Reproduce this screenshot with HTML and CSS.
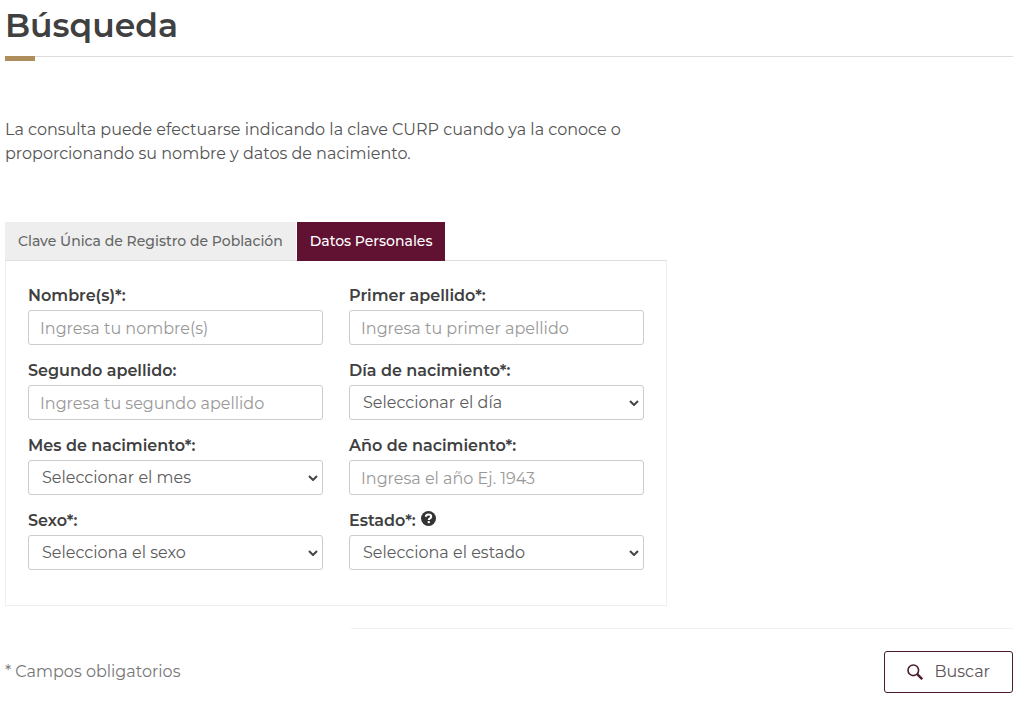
FILE: index.html
```
<!DOCTYPE html>
<html lang="es">

<head>
    <meta charset="UTF-8">
    <meta name="viewport" content="width=device-width, initial-scale=1.0">
    <title>Búsqueda</title>
    <link rel="stylesheet" href="styles.css">
</head>

<body>
    <main class="container">
        <h1>Búsqueda</h1>

        <form id="searchForm" class="row">
            <p class="intro">La consulta puede efectuarse indicando la clave CURP cuando ya la conoce o proporcionando su nombre y datos de nacimiento.</p>

            <div class="search">
                <nav class="tabs">
                    <a class="tab" href="#clave">Clave Única de Registro de Población</a>
                    <a class="tab active" href="#datos">Datos Personales</a>
                </nav>

                <div class="panel" id="datos">
                    <div class="form-group">
                        <label for="nombre">Nombre(s)*:</label>
                        <input type="text" id="nombre" name="nombre" placeholder="Ingresa tu nombre(s)">
                    </div>
                    <div class="form-group">
                        <label for="primerApellido">Primer apellido*:</label>
                        <input type="text" id="primerApellido" name="primerApellido" placeholder="Ingresa tu primer apellido">
                    </div>
                    <div class="form-group">
                        <label for="segundoApellido">Segundo apellido:</label>
                        <input type="text" id="segundoApellido" name="segundoApellido" placeholder="Ingresa tu segundo apellido">
                    </div>
                    <div class="form-group">
                        <label for="dia">Día de nacimiento*:</label>
                        <div class="select">
                            <select id="dia" name="dia">
                                <option>Seleccionar el día</option>
                            </select>
                            <svg class="chevron" viewBox="0 0 10 6" aria-hidden="true"><path d="M1 1l4 4 4-4"/></svg>
                        </div>
                    </div>
                    <div class="form-group">
                        <label for="mes">Mes de nacimiento*:</label>
                        <div class="select">
                            <select id="mes" name="mes">
                                <option>Seleccionar el mes</option>
                            </select>
                            <svg class="chevron" viewBox="0 0 10 6" aria-hidden="true"><path d="M1 1l4 4 4-4"/></svg>
                        </div>
                    </div>
                    <div class="form-group">
                        <label for="anio">Año de nacimiento*:</label>
                        <input type="text" id="anio" name="anio" placeholder="Ingresa el año Ej. 1943">
                    </div>
                    <div class="form-group">
                        <label for="sexo">Sexo*:</label>
                        <div class="select">
                            <select id="sexo" name="sexo">
                                <option>Selecciona el sexo</option>
                            </select>
                            <svg class="chevron" viewBox="0 0 10 6" aria-hidden="true"><path d="M1 1l4 4 4-4"/></svg>
                        </div>
                    </div>
                    <div class="form-group">
                        <label for="estado">Estado*:
                            <svg class="help" viewBox="0 0 16 16" aria-hidden="true">
                                <circle cx="8" cy="8" r="8" fill="#333"/>
                                <path d="M5.2 6.2C5.2 2.9 10.8 2.9 10.8 6c0 2-2.5 1.9-2.5 3.6" fill="none" stroke="#fff" stroke-width="2.3"/>
                                <path d="M7.1 10.8h2.4v2.2H7.1z" fill="#fff"/>
                            </svg>
                        </label>
                        <div class="select">
                            <select id="estado" name="estado">
                                <option>Selecciona el estado</option>
                            </select>
                            <svg class="chevron" viewBox="0 0 10 6" aria-hidden="true"><path d="M1 1l4 4 4-4"/></svg>
                        </div>
                    </div>
                </div>
            </div>

            <hr>

            <div class="actions">
                <span class="note">* Campos obligatorios</span>
                <button type="submit">
                    <svg class="search-icon" viewBox="0 0 16 16" aria-hidden="true">
                        <circle cx="6.3" cy="6.3" r="5.3"/>
                        <path d="M10.2 10.2l5 5" stroke-width="2.4"/>
                    </svg>
                    Buscar
                </button>
            </div>
        </form>
    </main>
</body>

</html>
```

FILE: styles.css
```
* {
    box-sizing: border-box;
}

body {
    font-family: Montserrat, Inter, sans-serif;
    font-size: 16px;
    line-height: 24px;
    background-color: #fff;
    color: #545454;
    margin: 0;
}

.container {
    padding: 5px 11px 11px 5px;
}

h1 {
    position: relative;
    margin: 0;
    padding-bottom: 11px;
    border-bottom: 1px solid #ddd;
    color: #404041;
    font-size: 33px;
    font-weight: 600;
    line-height: 40px;
}

/* gold accent under the title */
h1::after {
    content: "";
    position: absolute;
    top: 100%;
    left: 0;
    width: 30px;
    height: 5px;
    background-color: #ae8e5c;
}

.row {
    display: grid;
    grid-template-columns: repeat(12, 1fr);
    column-gap: 30px;
}

.intro {
    grid-column: span 8;
    margin: 61px 0 56px;
}

.search {
    grid-column: 1 / span 8;
}

.tabs {
    display: flex;
    gap: 1px;
}

.tab {
    padding: 7px 13px;
    background-color: #eee;
    color: #666;
    font-size: 14px;
    font-weight: 500;
    text-decoration: none;
}

/* the active tab covers the panel border */
.tab.active {
    margin-bottom: -1px;
    background-color: #611232;
    color: #fff;
    z-index: 1;
}

.panel {
    display: grid;
    grid-template-columns: 1fr 1fr;
    gap: 16px 26px;
    padding: 25px 22px 35px;
    border: 1px solid #eee;
    border-top-color: #ddd;
}

label {
    display: flex;
    align-items: flex-start;
    gap: 5px;
    padding-bottom: 4px;
    color: #404041;
    font-weight: 600;
    line-height: 20px;
}

.help {
    width: 15px;
    height: 15px;
}

input,
select {
    display: block;
    width: 100%;
    height: 35px;
    padding: 2px 11px 0;
    border: 1px solid #ccc;
    border-radius: 3px;
    background-color: #fff;
    color: #5c5c5c;
    font: inherit;
}

input::placeholder {
    color: #999;
    opacity: 1;
}

.select {
    position: relative;
}

select {
    appearance: none;
    padding: 0 28px 0 13px;
}

.chevron {
    position: absolute;
    top: 15px;
    right: 5px;
    width: 10px;
    height: 6px;
    fill: none;
    stroke: #444;
    stroke-width: 2;
    pointer-events: none;
}

hr {
    grid-column: 5 / -1;
    width: 100%;
    margin: 22px 0;
    border: 0;
    border-top: 1px solid #f0f0f0;
}

.actions {
    grid-column: 1 / -1;
    display: flex;
    align-items: center;
    justify-content: space-between;
}

.note {
    color: #777;
}

button {
    display: flex;
    align-items: center;
    gap: 12px;
    padding: 8px 22px;
    border: 1px solid #4a1c2c;
    border-radius: 3px;
    background-color: #fff;
    color: #5c5458;
    font: inherit;
    cursor: pointer;
}

.search-icon {
    width: 16px;
    height: 16px;
    fill: none;
    stroke: #4a1c2c;
    stroke-width: 1.6;
}
```
